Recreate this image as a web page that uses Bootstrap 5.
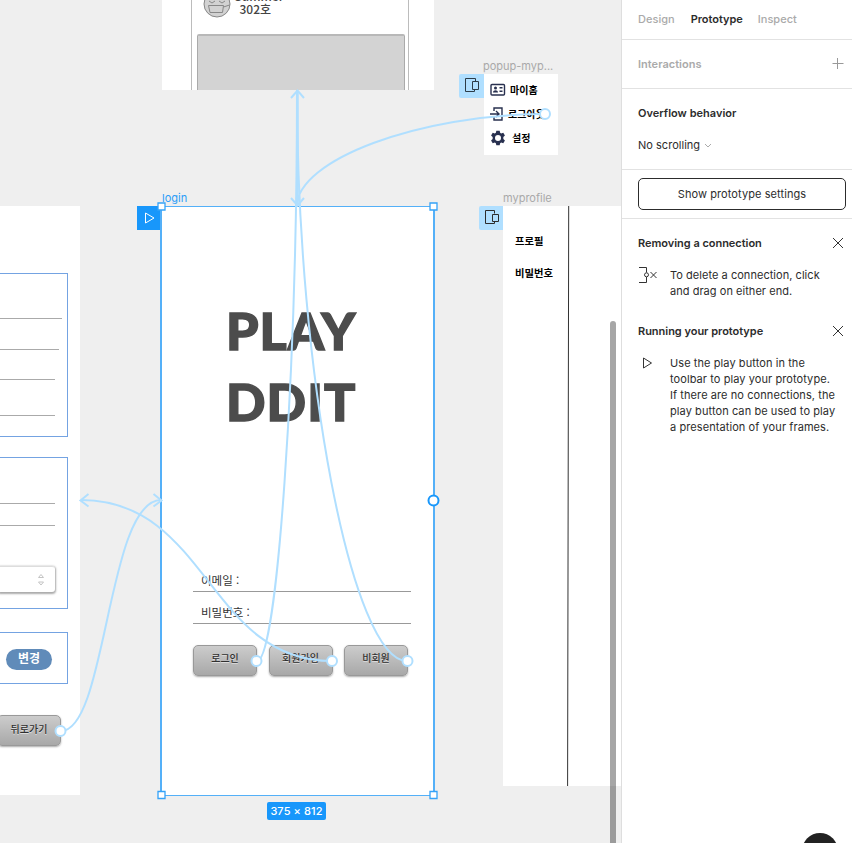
<!DOCTYPE html>
<html lang="ko">
<head>
<meta charset="utf-8">
<meta name="viewport" content="width=device-width, initial-scale=1">
<title>Prototype editor</title>
<link href="https://cdn.jsdelivr.net/npm/bootstrap@5.3.0/dist/css/bootstrap.min.css" rel="stylesheet">
<style>
body{font-family:Inter,"Noto Sans CJK KR",sans-serif;font-size:11px;line-height:16px;letter-spacing:.02px;color:#2c2c2c;width:852px;height:843px}
svg{display:block;flex:none}
.canvas{width:621px;background:#efefef}
.artboard{position:absolute;background:#fff}
.artboard{font-family:"Noto Sans CJK KR",sans-serif;letter-spacing:0}
.tag{position:absolute;color:#a9a9a9;font-size:11px;line-height:14px;white-space:nowrap;letter-spacing:0}
.marker{position:absolute;width:24px;height:24px;background:#b0dfff}
.marker-overlay{border-radius:2px 0 0 2px}
.overlay{position:absolute;left:0;top:0}
/* artboards */
.ab-home{left:161.500px;top:0;width:272px;height:90px}
.home-inner{margin:0 24.5px 0 29px;height:90px;border:solid #bcbcbc;border-width:0 1px 0 1.5px}
.home-head{height:34px;padding-left:11px}
.home-name{font-size:12px;line-height:14px;font-weight:500;color:#444;margin-left:4px;margin-top:-10px}
.home-name div:first-child{height:12px;line-height:12px}
.home-photo{margin:0 3px 0 5px;height:56px;background:#d3d3d3;border:1px solid #aaa;border-top:2px solid #b8b8b8;border-bottom:0;border-radius:2px 2px 0 0}
.ab-popup{left:484px;top:73.500px;width:74px;height:81.500px;padding:4px 0 0 6px;color:#000;font-weight:700;font-size:10px}
.popup-row{height:24px}
.ab-profile{left:503px;top:206px;width:118px;height:580px;font-weight:700;font-size:10.3px;color:#000}
.profile-menu{padding:27px 0 0 12px;width:64px}
.profile-menu div{height:32px;white-space:nowrap}
.ab-edit{left:0;top:206px;width:80px;height:589px;padding-top:67px}
.outlined{width:68px;border:1px solid #74a3e2;border-left:0}
.rule{height:1px;background:#aaa}
.select-box{width:55px;height:26px;margin-top:40px;border-radius:0 3px 3px 0;border-top:1px solid #ddd;box-shadow:0 1px 2px 1px #aaa;padding-right:10px}
.pill{width:46px;height:21px;border-radius:11px;background:#608bb9;color:#fff;font-size:12px;font-weight:700;line-height:18px;margin:16px 0 0 6px}
.gbtn{width:64px;height:31px;padding:0;border:1px solid #999;border-radius:5px;background:linear-gradient(#ccc,#a8a8a8);box-shadow:0 1px 2px #aaa;font-size:10px;font-weight:500;line-height:22px;padding-bottom:4px;color:#303030;text-shadow:0 1px #ddd;font-family:inherit}
.ab-login{left:160px;top:205.500px;width:275px;height:590.500px;border:solid #54b0f8;border-width:1px 2px 1px 2px;padding:88px 22px 0 31px}
.brand{font-family:Lato,sans-serif;font-weight:900;font-size:52px;line-height:71px;color:#4c4c4c;-webkit-text-stroke:1.400px #4c4c4c;letter-spacing:1px;padding-left:33px;height:265px}
.field{height:32px;border-bottom:1px solid #999;font-size:11.5px;line-height:20px;padding:10px 0 0 8px;color:#333;font-weight:400}
.btnrow{gap:11.5px;margin-top:21px}
.size-label{position:absolute;left:267px;top:802px;width:59px;height:17.5px;border-radius:2px;background:#1897fb;color:#fff;font-size:11px;font-weight:500;line-height:18px;letter-spacing:.1px}
.vscroll{position:absolute;left:610px;top:321px;width:6px;height:540px;border-radius:3px;background:rgba(0,0,0,.35)}
/* properties panel */
.panel{width:231px;border-left:1px solid #dedede;background:#fff}
.sect{border-bottom:1px solid #e2e2e2;padding-left:16px}
.muted{color:#aaa}
.btn-proto{width:208px;height:32px;border:1px solid #2c2c2c;border-radius:5px;padding:0;font-size:11px;letter-spacing:.08px;line-height:30px;color:#2c2c2c}
.tip-copy{margin-left:32px;white-space:nowrap;letter-spacing:.08px}
.help{position:absolute;left:802px;top:833px;width:36px;height:36px;border-radius:50%;background:#222}
</style>
<script src="https://cdn.jsdelivr.net/npm/bootstrap@5.3.0/dist/js/bootstrap.bundle.min.js"></script>
</head>
<body class="d-flex overflow-hidden position-relative m-0">
<main class="canvas h-100 position-relative overflow-hidden flex-shrink-0">

  <section class="artboard ab-home overflow-hidden">
    <div class="home-inner">
      <div class="home-head d-flex">
        <svg width="28" height="18" viewBox="0 0 28 18" fill="none" stroke="#888"><circle cx="14" cy="4" r="13" fill="#d2d2d2"/><path d="M5.500 5.500h15l-1 7h-12.500zM20.500 7l6-2M6 1l3 2 3-2M16 1l3 2 3-2"/></svg>
        <div class="home-name"><div>Summer</div><div style="padding-left:5px">302호</div></div>
      </div>
      <div class="home-photo"></div>
    </div>
  </section>

  <span class="tag" style="left:483px;top:59px">popup-myp...</span>
  <div class="marker marker-overlay d-flex align-items-center justify-content-center" style="left:459px;top:73.500px;width:25px"><svg width="18" height="18" viewBox="0 0 18 18" fill="none" stroke="#2c3c48"><path d="M12.500 4.500v-3h-10v13h9v-2M9.500 4.500h6v8h-6z"/></svg></div>
  <section class="artboard ab-popup">
    <div class="popup-row d-flex align-items-center"><svg width="16" height="14" viewBox="0 0 16 14"><rect x="1" y="1.500" width="13.500" height="10.500" rx="1" fill="none" stroke="#28304f" stroke-width="1.400"/><circle cx="5.500" cy="5" r="1.500" fill="#28304f"/><path d="M3 9.500c0-3 5-3 5 0zM9.500 4h3v1.500h-3zM9.500 7.500h3V9h-3z" fill="#28304f"/></svg><span class="ms-1">마이홈</span></div>
    <div class="popup-row d-flex align-items-center"><svg width="14" height="14" viewBox="0 0 14 14" fill="none" stroke="#28304f" stroke-width="1.400"><path d="M4 4V1h8v12H4v-3M0 7h8.500M6 4l3 3-3 3"/></svg><span class="ms-1">로그아웃</span></div>
    <div class="popup-row d-flex align-items-center"><svg width="16" height="16" viewBox="0 0 24 24"><path fill="#28304f" fill-rule="evenodd" d="M9.500 1h5l.7 3.200 1.500.9 3.200-1 2.500 4.300-2.400 2.200v2.800l2.400 2.200-2.500 4.300-3.200-1-1.500.9-.7 3.200h-5l-.7-3.200-1.500-.9-3.200 1-2.500-4.300L4 13.400v-2.800L1.600 8.400l2.500-4.300 3.200 1 1.500-.9zM12 7.500a4.500 4.500 0 1 0 0 9 4.500 4.500 0 0 0 0-9z"/></svg><span style="margin-left:6px">설정</span></div>
  </section>

  <span class="tag" style="left:503px;top:191px">myprofile</span>
  <div class="marker marker-overlay d-flex align-items-center justify-content-center" style="left:479px;top:206px"><svg width="18" height="18" viewBox="0 0 18 18" fill="none" stroke="#2c2c2c"><path d="M12.500 4.500v-3h-9v13h9v-2M10.500 5.500h6v7h-6z"/></svg></div>
  <section class="artboard ab-profile d-flex">
    <div class="profile-menu"><div>프로필</div><div>비밀번호</div></div>
    <svg width="3" height="580"><path d="M1.700 0L.6 580" stroke="#333"/></svg>
  </section>

  <section class="artboard ab-edit">
    <div class="outlined" style="height:164px;padding-top:44px">
      <div class="rule" style="width:62px"></div>
      <div class="rule" style="width:59px;margin-top:30px"></div>
      <div class="rule" style="width:55px;margin-top:29px"></div>
      <div class="rule" style="width:55px;margin-top:35px"></div>
    </div>
    <div class="outlined" style="height:152px;margin-top:20px;padding-top:45px">
      <div class="rule" style="width:55px"></div>
      <div class="rule" style="width:55px;margin-top:21px"></div>
      <div class="select-box d-flex align-items-center justify-content-end"><svg width="8" height="14" viewBox="0 0 8 14" fill="none" stroke="#c4c4c4"><path d="M1.500 4.500L4 1.500l2.500 3zM1.500 9L4 12l2.500-3z"/></svg></div>
    </div>
    <div class="outlined" style="height:52px;margin-top:23px"><div class="pill text-center">변경</div></div>
    <button class="btn gbtn d-block" style="margin:31px 0 0 -3px">뒤로가기</button>
  </section>

  <span class="tag" style="left:162px;top:191px;color:#2b9df8">login</span>
  <div class="marker d-flex align-items-center justify-content-center" style="left:137px;top:206px;background:#1897fb"><svg width="14" height="14" viewBox="0 0 14 14" fill="none" stroke="#fff"><path d="M3.500 2v10L12 7z"/></svg></div>
  <section class="artboard ab-login">
    <div class="brand"><div>PLAY</div><div>DDIT</div></div>
    <div class="field">이메일 :</div>
    <div class="field">비밀번호 :</div>
    <div class="btnrow d-flex"><button class="btn gbtn">로그인</button><button class="btn gbtn">회원가입</button><button class="btn gbtn">비회원</button></div>
  </section>

  <!-- connections between artboards -->
  <svg class="overlay" width="621" height="843" fill="none" stroke="#b0dfff" stroke-width="2">
    <path d="M545 114C420 114 297 160 297 206M257 661C277 661 297 375 297 90M407 661C352 661 297 375 297 90M332 661C208 661 208 500 81 500M61 731C107 731 107 500 161 500"/>
    <path d="M297.500 92V204" stroke-width="2.500"/>
    <path d="M291 98l6.500-7.500L304 98M291 198l6.500 7.500L304 198M88.500 494l-8 6.500 8 6M153.500 494l8 6.500-8 6"/>
    <g fill="#fff"><circle cx="545" cy="114" r="5"/><circle cx="256.500" cy="661" r="5"/><circle cx="332" cy="661" r="5"/><circle cx="407.500" cy="661" r="5"/><circle cx="60.500" cy="731" r="5"/></g>
    <circle cx="433.500" cy="500.500" r="5" fill="#fff" stroke="#1897fb"/>
    <g fill="#fff" stroke="#35a2f8" stroke-width="1.300"><path d="M158 203h7v7h-7zM430 203h7v7h-7zM158 791.500h7v7h-7zM430 791.500h7v7h-7z"/></g>
  </svg>
  <div class="size-label text-center">375 × 812</div>
  <div class="vscroll"></div>
</main>

<aside class="panel h-100 flex-shrink-0">
  <nav class="sect d-flex fw-semibold" style="height:40px;padding-top:11px;gap:16px"><span class="muted fw-medium">Design</span><span style="letter-spacing:-.03px">Prototype</span><span class="muted fw-medium" style="margin-left:-1px">Inspect</span></nav>
  <div class="sect d-flex align-items-center justify-content-between fw-medium muted" style="height:49px;padding-right:8px"><span class="fw-semibold">Interactions</span><svg width="12" height="12" stroke="#999"><path d="M.5 5.500h11M5.500 0v11"/></svg></div>
  <div class="sect" style="height:81px;padding-top:16px">
    <div class="fw-semibold">Overflow behavior</div>
    <div class="d-flex align-items-center" style="margin-top:16px;gap:4px"><span>No scrolling</span><svg width="8" height="8" fill="none" stroke="#aaa"><path d="M1 3l3 3 3-3"/></svg></div>
  </div>
  <div class="sect" style="height:49px;padding-top:8px"><button class="btn btn-proto">Show prototype settings</button></div>
  <div style="padding:16px 8px 0 16px">
    <div class="d-flex justify-content-between align-items-center fw-semibold"><span style="letter-spacing:-.03px">Removing a connection</span><svg width="12" height="12" stroke="#333"><path d="M1 1l10 10M11 1L1 11"/></svg></div>
    <div class="position-relative" style="margin-top:16px"><svg class="overlay" width="20" height="20" fill="none" stroke="#333"><path d="M1 .5h7.500v5M8.500 10v5.500H1M12.500 5l6 6M18.500 5l-6 6"/><circle cx="8.500" cy="7.800" r="2"/></svg><div class="tip-copy" style="letter-spacing:.04px">To delete a connection, click<br>and drag on either end.</div></div>
    <div class="d-flex justify-content-between align-items-center fw-semibold" style="margin-top:24px"><span style="letter-spacing:-.02px">Running your prototype</span><svg width="12" height="12" stroke="#333"><path d="M1 1l10 10M11 1L1 11"/></svg></div>
    <div class="position-relative" style="margin-top:16px"><svg class="overlay" width="20" height="20" fill="none" stroke="#333"><path d="M5.500 3v10l8-5z"/></svg><div class="tip-copy">Use the play button in the<br>toolbar to play your prototype.<br>If there are no connections, the<br>play button can be used to play<br>a presentation of your frames.</div></div>
  </div>
</aside>
<div class="help"></div>
</body>
</html>
